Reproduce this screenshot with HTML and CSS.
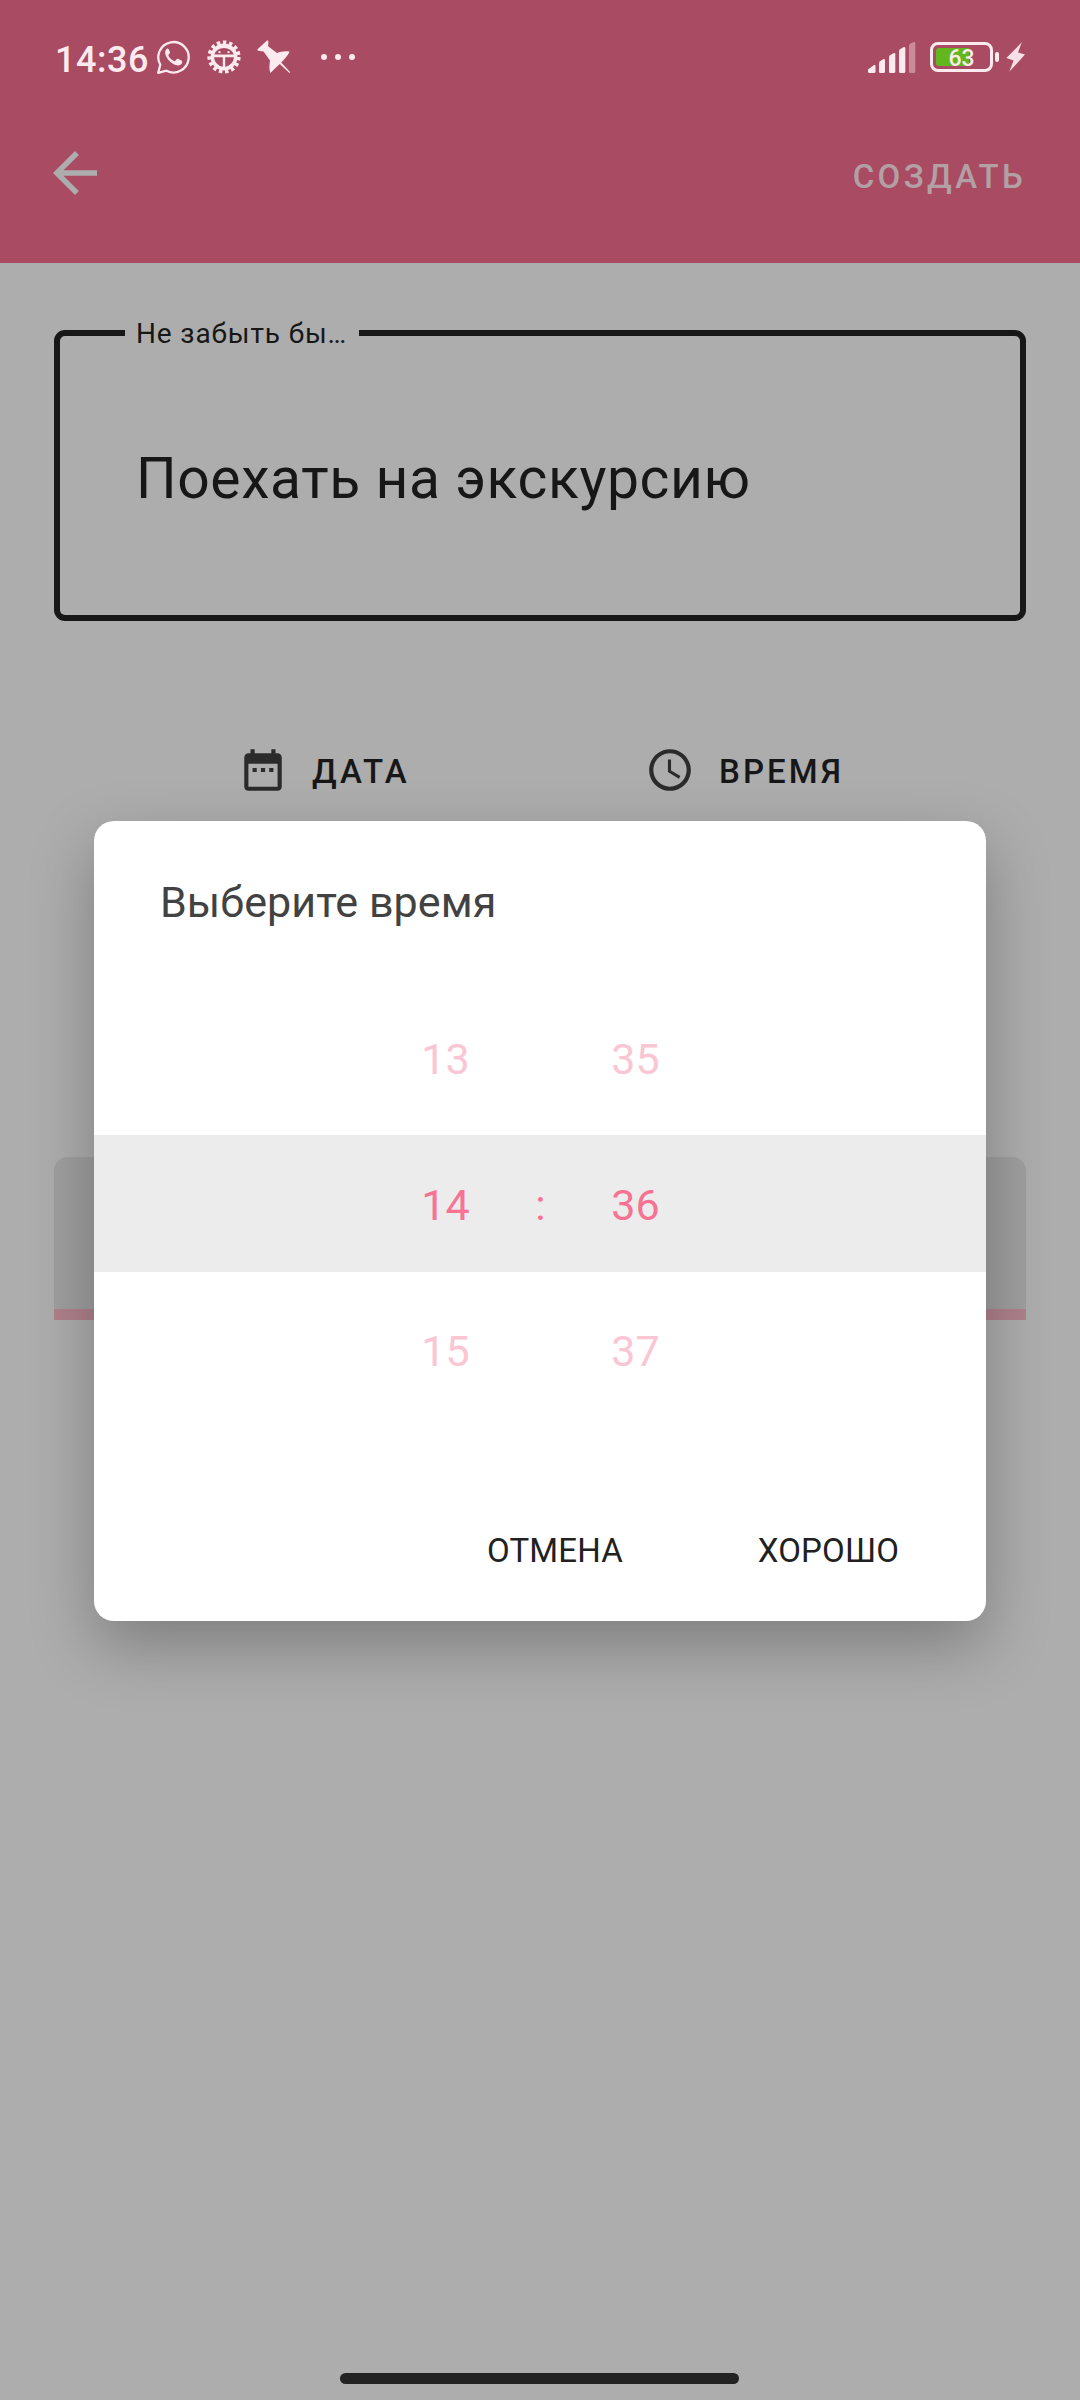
FILE: index.html
```html
<!DOCTYPE html>
<html lang="ru">
<head>
<meta charset="utf-8">
<title>Создать напоминание</title>
<link rel="stylesheet" href="styles.css">
</head>
<body>
<div class="screen">
  <header class="header">
    <div class="status">
      <span class="status-time">14:36</span>
      <svg class="ico-whatsapp" viewBox="0 0 34 34" width="34" height="34">
        <path d="M1.2 32.8 3.3 24.8A15.2 15.2 0 1 1 9.4 30.7Z" fill="none" stroke="#fbeaee" stroke-width="2.3" stroke-linejoin="round"/>
        <path d="M11.7 9.2c-.5-.9-1.6-.8-2.3 0-1.400 1.500-1.600 3.600-.8 5.700 1.900 4.800 5.600 8.600 10.300 10.200 2.300.8 4.800.1 6-1.900.5-1 .5-2.100-.1-2.500l-3.700-1.900c-.6-.3-1.100-.1-1.500.4l-1.300 1.600c-.4.4-.8.4-1.300.2-2.600-1.200-4.300-3-5.500-5.300-.2-.5-.1-.8.200-1.200l1-1.300c.4-.5.4-.9.200-1.400z" fill="#fbeaee"/>
      </svg>
      <svg class="ico-gear" viewBox="0 0 34 34" width="34" height="34">
        <circle cx="17" cy="17" r="14.600" fill="none" stroke="#fbeaee" stroke-width="4" stroke-dasharray="3.400 2.715"/>
        <circle cx="17" cy="17" r="13.500" fill="#fbeaee"/>
        <path d="M7.300 14.600a10 8.800 0 0 1 19.400 0zM7 17.300h8.800v9.500A10.500 10.500 0 0 1 7 17.300zM18.200 17.300H27a10.500 10.500 0 0 1-8.800 9.500z" fill="#a94b62"/>
        <circle cx="12.500" cy="12.100" r="1.200" fill="#fbeaee"/><circle cx="21.500" cy="12.100" r="1.200" fill="#fbeaee"/>
      </svg>
      <svg class="ico-pin" viewBox="0 0 34 34" width="34" height="34">
        <path d="M10 .5c.9-.3 1.400.2 1.400 1l-.3 4.700 8.900 6.800c3.600-1.500 8.300-2.300 12.500-1.400-1.300 3.400-3.300 5.800-6.100 8.700l-2.200 2.300 9.100 9.600-.9.900-9.600-9.200-2.500 2.400-6.900 6.700c-1.500-3.500-1-8.200-.4-12.500L6.500 11.600l-5.300-.8C.2 10.600.1 9.800.8 9.100z" fill="#fbeaee"/>
      </svg>
      <span class="dots"><i></i><i></i><i></i></span>
      <svg class="ico-signal" viewBox="0 0 48 31" width="48" height="31" fill="#fbeaee">
        <path d="M0 27.500 6 23q1.500-.5 1.500 1v5.500q0 1.500-1.500 1.500H1.500Q0 31 0 29.500z"/>
        <path d="M11 21.500Q11 20 12 19.300l3-2q2-1 2 1v11.200q0 1.500-1.500 1.500h-3Q11 31 11 29.500z"/>
        <path d="M21 15.500Q21 14 22 13.300l3.300-2q2-1 2 1v17.200q0 1.500-1.500 1.500h-3.300Q21 31 21 29.500z"/>
        <path d="M31 9.500Q31 8 32 7.300l3.300-2q2-1 2 1v23.200q0 1.500-1.500 1.500h-3.300Q31 31 31 29.500z"/>
        <path d="M41 4Q41 2.500 42 1.800L45 .2q2-.8 2.300 1v28.300q0 1.500-1.500 1.500h-3.300Q41 31 41 29.500z" opacity=".4"/>
      </svg>
      <span class="battery"><span class="battery-level"></span><span class="battery-text">63</span></span>
      <span class="battery-cap"></span>
      <svg class="ico-bolt" viewBox="0 0 20 30" width="20" height="30">
        <path d="M15.800.3.300 16l7.300 2.600L3.300 29.700 19 12.600l-7-2.200z" fill="#f6dfe5"/>
      </svg>
    </div>
    <div class="toolbar">
      <svg viewBox="0 0 24 24" width="66" height="66"><path d="M20 11H7.830l5.590-5.590L12 4l-8 8 8 8 1.410-1.410L7.830 13H20v-2z" fill="#adadad"/></svg>
      <span class="create">СОЗДАТЬ</span>
    </div>
  </header>
  <main class="form">
    <fieldset class="outlined">
      <legend>Не забыть бы…</legend>
      <div class="outlined-value">Поехать на экскурсию</div>
    </fieldset>
    <div class="pickers">
      <div class="picker picker-date">
        <svg viewBox="0 0 24 24" width="50" height="50"><path d="M9 11H7v2h2v-2zm4 0h-2v2h2v-2zm4 0h-2v2h2v-2zm2-7h-1V2h-2v2H8V2H6v2H5c-1.110 0-1.990.9-1.990 2L3 20c0 1.100.890 2 2 2h14c1.100 0 2-.9 2-2V6c0-1.100-.9-2-2-2zm0 16H5V9h14v11z" fill="#2b2b2b"/></svg>
        <span>ДАТА</span>
      </div>
      <div class="picker">
        <svg viewBox="0 0 24 24" width="50" height="50"><path d="M11.990 2C6.470 2 2 6.480 2 12s4.470 10 9.990 10C17.520 22 22 17.520 22 12S17.520 2 11.990 2zM12 20c-4.420 0-8-3.580-8-8s3.580-8 8-8 8 3.580 8 8-3.580 8-8 8zm.5-13H11v6l5.250 3.150.750-1.230-4.500-2.670z" fill="#2b2b2b"/></svg>
        <span>ВРЕМЯ</span>
      </div>
    </div>
    <div class="filled"></div>
  </main>
  <footer class="nav"><span class="nav-handle"></span></footer>

  <section class="dialog">
    <h1 class="dialog-title">Выберите время</h1>
    <div class="wheel">
      <span class="dim">13</span><span></span><span class="dim">35</span>
      <span>14</span><span>:</span><span>36</span>
      <span class="dim">15</span><span></span><span class="dim">37</span>
    </div>
    <div class="actions"><span>ОТМЕНА</span><span>ХОРОШО</span></div>
  </section>
</div>
</body>
</html>
```
FILE: styles.css
```css
* { box-sizing: border-box; }
body { margin: 0; font-family: Roboto, sans-serif; color: #171717; }
svg, i { display: block; flex: none; }
.screen {
  position: relative;
  display: flex;
  flex-direction: column;
  width: 1080px;
  height: 2400px;
  background: #adadad;
  overflow: hidden;
}

/* Header */
.header { height: 263px; background: #a94b62; }
.status {
  display: flex;
  align-items: center;
  height: 114px;
  padding: 0 54px 0 55px;
}
.status-time {
  width: 102px;
  padding-top: 5px;
  font-size: 36px;
  font-weight: 500;
  letter-spacing: .5px;
  line-height: 40px;
  color: #fbeaee;
}
.ico-gear { margin-left: 16px; }
.ico-pin { margin-left: 16px; }
.dots { display: flex; gap: 8px; margin: 0 auto 0 30px; }
.dots i { width: 6px; height: 6px; border-radius: 50%; background: #fbeaee; }
.ico-signal { margin-top: 1px; }
.battery {
  position: relative;
  width: 63px;
  height: 30px;
  margin-left: 14px;
  padding: 3px;
  border: 3px solid #fbeaee;
  border-radius: 8px;
}
.battery-level {
  display: block;
  width: 33px;
  height: 18px;
  border-radius: 3px 0 0 3px;
  background: #61b71c;
}
.battery-text {
  position: absolute;
  inset: 0;
  font-size: 23px;
  font-weight: 500;
  line-height: 27px;
  text-align: center;
  color: #fbeaee;
}
.battery-cap { width: 4px; height: 10px; margin: 0 7px 0 2px; border-radius: 2px; background: #fbeaee; }

.toolbar {
  display: flex;
  align-items: center;
  justify-content: space-between;
  height: 118px;
  padding: 0 54px 0 42px;
}
.create {
  padding-top: 8px;
  font-size: 33px;
  font-weight: 500;
  letter-spacing: 3.3px;
  line-height: 40px;
  color: #b2a0a4;
}

/* Form */
.form { flex: 1; padding: 53px 54px 0; }
.outlined {
  height: 305px;
  margin: 0;
  padding: 0 76px;
  border: 6px solid #171717;
  border-radius: 11px;
}
.outlined legend {
  height: 34px;
  margin-left: -11px;
  padding: 0 11px;
  width: 234px;
  font-size: 28px;
  letter-spacing: .86px;
  line-height: 36px;
  white-space: nowrap;
}
.outlined-value {
  padding-top: 91px;
  font-size: 57px;
  letter-spacing: .6px;
  line-height: 76px;
}
.pickers { display: flex; margin-top: 124px; padding-left: 184px; }
.picker {
  display: flex;
  align-items: center;
  gap: 24px;
  height: 50px;
  font-size: 33px;
  font-weight: 500;
  letter-spacing: 3.1px;
  line-height: 40px;
}
.picker-date { width: 407px; }
.picker span { padding-top: 4px; }
.filled {
  height: 163px;
  margin-top: 362px;
  border-radius: 14px 14px 0 0;
  background: linear-gradient(#9f9f9f 152px, #af818b 152px);
}
.nav { display: flex; height: 27px; padding-left: 340px; }
.nav-handle { width: 399px; height: 11px; border-radius: 6px; background: #232323; }

/* Time picker dialog, floating above the form */
.dialog {
  position: absolute;
  top: 821px;
  left: 94px;
  display: flex;
  flex-direction: column;
  width: 892px;
  height: 800px;
  border-radius: 20px;
  background: #fff;
  box-shadow: 0 25px 64px rgba(0, 0, 0, .27);
}
.dialog-title {
  margin: 0;
  padding: 51px 66px 0;
  font-size: 43px;
  font-weight: 400;
  letter-spacing: .08px;
  line-height: 60px;
  color: #424242;
}
.wheel {
  display: grid;
  grid-template-columns: repeat(3, 95px);
  grid-auto-rows: 146px;
  justify-content: center;
  margin-top: 54px;
  padding-left: 1px;
  background: linear-gradient(#ececec, #ececec) 0 149px / 100% 137px no-repeat;
  font-size: 43px;
  line-height: 146px;
  text-align: center;
  color: #f87294;
}
.wheel .dim { color: #fac6d3; }
.actions {
  display: flex;
  justify-content: flex-end;
  gap: 135px;
  margin-top: 107px;
  padding-right: 87px;
  font-size: 33px;
  letter-spacing: .15px;
  line-height: 40px;
  color: #212121;
}
```
